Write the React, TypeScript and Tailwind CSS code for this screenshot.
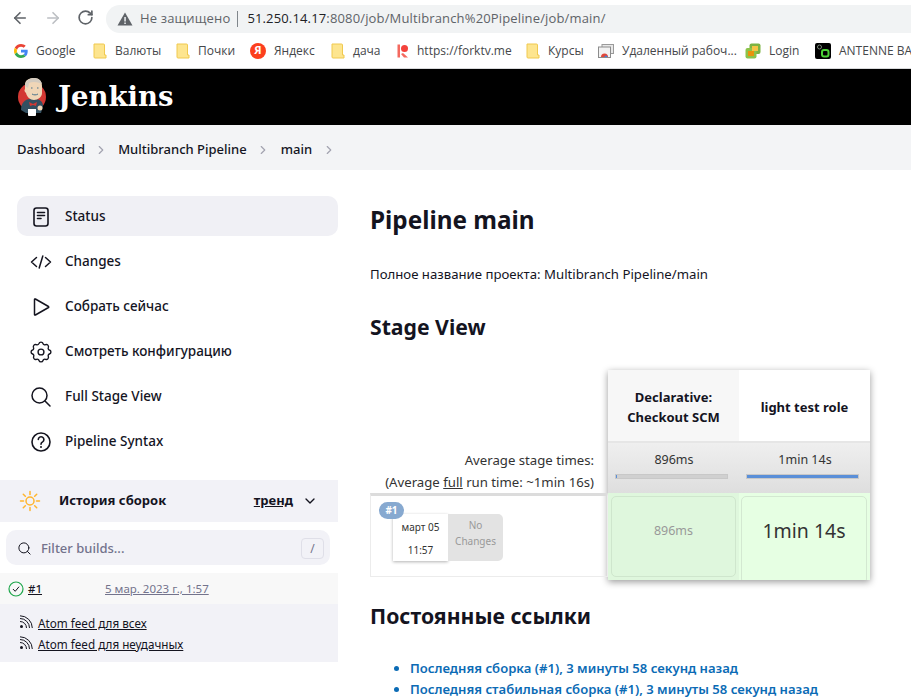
import React from "react";
import { ArrowLeft, ArrowRight, ChevronDown, ChevronRight, RotateCw, Search } from "lucide-react";

const ui = "font-['Open_Sans',sans-serif]";

const Folder = () => (
  <svg width="14" height="16" viewBox="0 0 14 16" className="shrink-0">
    <path d="M1 1h9.500a1 1 0 0 1 1 1v10h1.500v3H2a1 1 0 0 1-1-1z" fill="#fde58f" stroke="#f0c94f" strokeWidth="1" />
  </svg>
);

const Bookmark = ({ icon, label, w }: { icon: React.ReactNode; label: string; w: string }) => (
  <div className={`flex items-center gap-[8px] shrink-0 ${w}`}>
    {icon}
    <span className="text-[12px] text-[#45474a] whitespace-nowrap">{label}</span>
  </div>
);

const BrowserBar = () => (
  <div className={`${ui} bg-white border-b border-[#d9dadc]`}>
    <div className="h-[35px] flex items-center">
      <div className="w-[106px] pl-[11px] flex items-center gap-[15px] shrink-0">
        <ArrowLeft size={18} color="#5f6368" strokeWidth={2.2} />
        <ArrowRight size={18} color="#bcbfc3" strokeWidth={2.2} />
        <RotateCw size={17} color="#5f6368" strokeWidth={2.4} />
      </div>
      <div className="flex-1 h-[28px] mt-[3px] bg-[#f1f3f4] rounded-l-[14px] flex items-center pl-[11px] text-[13px] tracking-[0.15px] whitespace-nowrap">
        <svg width="16" height="14" viewBox="0 0 16 14" className="shrink-0">
          <path d="M8 0.500 15.500 13.500H0.500z" fill="#5f6368" />
          <rect x="7.300" y="5" width="1.500" height="4.500" fill="#f1f3f4" />
          <rect x="7.300" y="10.500" width="1.500" height="1.500" fill="#f1f3f4" />
        </svg>
        <span className="ml-[7px] text-[#5f6368]">Не защищено</span>
        <span className="ml-[7px] w-px h-[16px] bg-[#80868b]" />
        <span className="ml-[9px] text-[#202124]">51.250.14.17</span>
        <span className="text-[#5f6368]">:8080/job/Multibranch%20Pipeline/job/main/</span>
      </div>
    </div>
    <div className="h-[33px] pb-[2px] flex items-center pl-[14px] overflow-hidden">
      <Bookmark
        w="w-[79px]"
        label="Google"
        icon={
          <svg width="14" height="14" viewBox="0 0 48 48" className="shrink-0">
            <path fill="#EA4335" d="M24 9.500c3.500 0 6.700 1.200 9.200 3.600l6.900-6.900C35.900 2.400 30.500 0 24 0 14.600 0 6.500 5.400 2.600 13.200l8 6.200C12.500 13.700 17.800 9.500 24 9.500z" />
            <path fill="#4285F4" d="M47 24.500c0-1.600-.1-3.100-.4-4.500H24v9h13c-.6 3-2.300 5.500-4.800 7.200l7.700 6C44.400 38 47 31.800 47 24.500z" />
            <path fill="#FBBC05" d="M10.500 28.600c-.5-1.400-.8-3-.8-4.600s.3-3.200.8-4.600l-8-6.200C.9 16.500 0 20.100 0 24s.9 7.500 2.600 10.800z" />
            <path fill="#34A853" d="M24 48c6.500 0 11.900-2.100 15.900-5.800l-7.700-6c-2.200 1.500-4.900 2.300-8.200 2.300-6.200 0-11.500-4.200-13.400-9.900l-8 6.200C6.500 42.600 14.600 48 24 48z" />
          </svg>
        }
      />
      <Bookmark w="w-[83px]" label="Валюты" icon={<Folder />} />
      <Bookmark w="w-[74px]" label="Почки" icon={<Folder />} />
      <Bookmark
        w="w-[81px]"
        label="Яндекс"
        icon={
          <span className="w-[16px] h-[16px] rounded-full bg-[#fc3f1d] text-white text-[11px] font-bold flex items-center justify-center shrink-0">
            Я
          </span>
        }
      />
      <Bookmark w="w-[66px]" label="дача" icon={<Folder />} />
      <Bookmark
        w="w-[129px]"
        label="https://forktv.me"
        icon={
          <svg width="12" height="14" viewBox="0 0 12 14" className="shrink-0">
            <rect x="0.500" y="0.500" width="2.500" height="13" fill="#f4695f" />
            <circle cx="7.500" cy="4.500" r="3.500" fill="#f4433c" />
            <path d="M6 9l5 4.500H7L4 10z" fill="#f4695f" />
          </svg>
        }
      />
      <Bookmark w="w-[72px]" label="Курсы" icon={<Folder />} />
      <Bookmark
        w="w-[147px]"
        label="Удаленный рабоч..."
        icon={
          <svg width="16" height="14" viewBox="0 0 16 14" className="shrink-0">
            <rect x="4" y="0.500" width="11.500" height="9" fill="#e8e8e8" stroke="#9a9a9a" />
            <rect x="0.500" y="3" width="12" height="10.500" fill="#f2f2f2" stroke="#8c8c8c" />
            <path d="M3 13a3.500 3.500 0 0 1 7 0z" fill="#e0483a" />
            <path d="M6.500 13a1.500 1.500 0 0 1 3 0z" fill="#3f7fe0" />
          </svg>
        }
      />
      <Bookmark
        w="w-[70px]"
        label="Login"
        icon={
          <svg width="16" height="16" viewBox="0 0 16 16" className="shrink-0">
            <rect x="4.500" y="0.500" width="11" height="10.500" rx="2" fill="#7cb342" />
            <rect x="0.500" y="5" width="11" height="10.500" rx="2" fill="#8bc34a" />
            <rect x="7" y="3" width="6" height="5" fill="#f6c445" />
            <rect x="3" y="8" width="6" height="5" fill="#e8930c" />
          </svg>
        }
      />
      <Bookmark
        w="w-[120px]"
        label="ANTENNE BAYERN"
        icon={
          <svg width="16" height="16" viewBox="0 0 16 16" className="shrink-0">
            <rect width="16" height="16" rx="2" fill="#000" />
            <circle cx="4.500" cy="4" r="2" fill="none" stroke="#7a8a7a" />
            <rect x="7" y="7" width="6.500" height="6.500" rx="2" fill="none" stroke="#4cd137" strokeWidth="2" />
          </svg>
        }
      />
    </div>
  </div>
);

const JenkinsLogo = () => (
  <svg width="30" height="40" viewBox="0 0 30 40" className="shrink-0">
    <circle cx="15" cy="20" r="14" fill="#d33833" />
    <path d="M4 33c0-7 4-11 9-11h5c5 0 8 3 8 7l-2 7H9z" fill="#335061" />
    <path d="M8 8c0-5 4-7 9-7s8 3 8 8v7c0 4-4 7-8 7-4 0-7-3-8-7-1.500-1-2-3-1-4z" fill="#f0d6b7" />
    <path d="M8 9c0-5 4-8 9-8 4 0 7 2 8 6-4-2-9-3-13-1l-1 5z" fill="#d3cbc0" />
    <path d="M14 11h1.500M20 11h1.500M15 17c2 1.200 4 1.200 6 0" stroke="#49728b" strokeWidth="1" fill="none" />
    <path d="M12 25l4 2 4-2-1 4-3-1-3 1z" fill="#d33833" />
    <path d="M11 32h8v6a1 1 0 0 1-1 1h-6a1 1 0 0 1-1-1z" fill="#fff" />
    <circle cx="23" cy="31" r="2.500" fill="#f0d6b7" />
  </svg>
);

const navItems: { label: string; icon: React.ReactNode }[] = [
  {
    label: "Status",
    icon: (
      <svg width="22" height="22" viewBox="0 0 22 22" fill="none" stroke="#14141f" strokeWidth="1.600" strokeLinecap="round">
        <rect x="4" y="2" width="14" height="18" rx="2.500" />
        <path d="M7.500 6.500h7M7.500 9.500h7M7.500 12.500h3.500" />
      </svg>
    ),
  },
  {
    label: "Changes",
    icon: (
      <svg width="22" height="22" viewBox="0 0 22 22" fill="none" stroke="#14141f" strokeWidth="1.500" strokeLinecap="round" strokeLinejoin="round">
        <path d="M6.500 6.500 1.500 11l5 4.500M15.500 6.500l5 4.500-5 4.500M12.800 5 9.200 17" />
      </svg>
    ),
  },
  {
    label: "Собрать сейчас",
    icon: (
      <svg width="22" height="22" viewBox="0 0 22 22" fill="none" stroke="#14141f" strokeWidth="1.500" strokeLinejoin="round">
        <path d="M4.500 3.500v15a.6.6 0 0 0 .9.500L18.500 11.500a.6.6 0 0 0 0-1L5.400 3a.6.6 0 0 0-.9.500z" />
      </svg>
    ),
  },
  {
    label: "Смотреть конфигурацию",
    icon: (
      <svg width="22" height="22" viewBox="0 0 24 24" fill="none" stroke="#14141f" strokeWidth="1.500" strokeLinejoin="round">
        <path d="M9.800 2.800a2.300 2.300 0 0 1 4.400 0c.4 1.200 1.700 1.700 2.800 1.200a2.300 2.300 0 0 1 3 3c-.5 1.100 0 2.400 1.200 2.800a2.300 2.300 0 0 1 0 4.400c-1.200.4-1.700 1.700-1.200 2.800a2.300 2.300 0 0 1-3 3c-1.100-.5-2.400 0-2.800 1.200a2.300 2.300 0 0 1-4.400 0c-.4-1.200-1.700-1.700-2.800-1.200a2.300 2.300 0 0 1-3-3c.5-1.100 0-2.400-1.200-2.800a2.300 2.300 0 0 1 0-4.400C3.800 9.400 4.300 8.100 3.800 7a2.300 2.300 0 0 1 3-3c1.100.5 2.400 0 3-1.200z" />
        <circle cx="12" cy="12" r="3.200" />
      </svg>
    ),
  },
  {
    label: "Full Stage View",
    icon: (
      <svg width="22" height="22" viewBox="0 0 22 22" fill="none" stroke="#14141f" strokeWidth="1.500" strokeLinecap="round">
        <circle cx="9.500" cy="9.500" r="7.500" />
        <path d="m15 15 5 5" />
      </svg>
    ),
  },
  {
    label: "Pipeline Syntax",
    icon: (
      <svg width="22" height="22" viewBox="0 0 22 22" fill="none" stroke="#14141f" strokeWidth="1.600" strokeLinecap="round">
        <circle cx="11" cy="11" r="9" />
        <path d="M8.300 8.500a2.800 2.800 0 1 1 4.300 2.400c-1 .6-1.600 1.200-1.600 2.300" />
        <path d="M11 16v.1" strokeWidth="2" />
      </svg>
    ),
  },
];

const Rss = () => (
  <svg width="14" height="14" viewBox="0 0 14 14" fill="none" stroke="#14141f" strokeWidth="1" className="shrink-0 -mt-[3px]">
    <circle cx="2.500" cy="11.500" r="1.500" fill="#14141f" stroke="none" />
    <path d="M1 6.500a6.500 6.500 0 0 1 6.500 6.500M1 3.500A9.500 9.500 0 0 1 10.500 13M1 .8A12.300 12.300 0 0 1 13.300 13" />
  </svg>
);

const Sidebar = () => (
  <aside className="w-[338px] shrink-0">
    <nav className="pl-[17px] pt-[26px] flex flex-col gap-[5px]">
      {navItems.map((item, i) => (
        <div
          key={item.label}
          className={`h-[40px] pt-[2px] rounded-[10px] flex items-center pl-[13px] gap-[13px] text-[13.500px] text-[#14141f] font-medium ${
            i === 0 ? "bg-[#f0f0f5]" : ""
          }`}
        >
          <span className="w-[22px] h-[22px] flex items-center justify-center shrink-0">{item.icon}</span>
          <span className="pb-[2px]">{item.label}</span>
        </div>
      ))}
    </nav>

    <div className="mt-[19px] h-[42px] bg-[#f2f2f7] flex items-center pl-[19px] pr-[20px]">
      <svg width="22" height="22" viewBox="0 0 22 22" fill="none" stroke="#ffb52e" strokeWidth="1.500" strokeLinecap="round" className="shrink-0">
        <circle cx="11" cy="11" r="4" />
        <path d="M11 1.500v3M11 17.500v3M1.500 11h3M17.500 11h3M4.300 4.300l2 2M15.700 15.700l2 2M4.300 17.700l2-2M15.700 6.300l2-2" />
      </svg>
      <span className="ml-[18px] text-[13px] font-bold text-[#14141f]">История сборок</span>
      <span className="ml-auto text-[13px] font-bold text-[#14141f] underline">тренд</span>
      <ChevronDown size={16} color="#14141f" className="ml-[9px]" />
    </div>

    <div className="mt-[8px] mx-[6px] w-[324px] h-[35px] pt-[2px] bg-[#f2f2f7] rounded-[10px] flex items-center pl-[11px] pr-[6px]">
      <Search size={15} color="#14141f" strokeWidth={1.600} />
      <span className="ml-[9px] text-[13px] font-medium text-[#73738c]">Filter builds...</span>
      <span className="ml-auto w-[23px] h-[21px] border border-[#dfdfe8] rounded-[4px] text-[12px] text-[#73738c] flex items-center justify-center">
        /
      </span>
    </div>

    <div className="mt-[8px] h-[31px] bg-[#f8f8f8] flex items-center pl-[8px] text-[11.500px]">
      <svg width="16" height="16" viewBox="0 0 16 16" fill="none" stroke="#1ea64b" strokeWidth="1.200" strokeLinecap="round" strokeLinejoin="round" className="shrink-0">
        <circle cx="8" cy="8" r="7" />
        <path d="m5.200 8.300 2 2 3.600-4.300" stroke="#14141f" strokeWidth="1" />
      </svg>
      <span className="ml-[4px] w-[77px] font-medium text-[#14141f] underline">#1</span>
      <span className="text-[#73738c] underline">5 мар. 2023 г., 1:57</span>
    </div>

    <div className="h-[58px] bg-[#f2f2f7] pl-[19px] pt-[12px] flex flex-col gap-[6px] text-[11.700px] text-[#14141f]">
      <div className="flex items-center gap-[5px] h-[15px]">
        <Rss />
        <span className="underline">Atom feed для всех</span>
      </div>
      <div className="flex items-center gap-[5px] h-[15px]">
        <Rss />
        <span className="underline">Atom feed для неудачных</span>
      </div>
    </div>
  </aside>
);

const StageHeader = ({ children, bg }: { children: React.ReactNode; bg: string }) => (
  <div className={`h-[71px] pt-[2px] flex items-center justify-center text-center text-[13px] leading-[20px] font-bold text-[#14141f] ${bg}`}>
    {children}
  </div>
);

const StageAverage = ({ label, fill }: { label: string; fill: string }) => (
  <div className="h-[52px] bg-gradient-to-b from-[#efefef] to-[#dedede] border-t-2 border-[#e6e6e6] pl-[7px] pr-[6px] pt-[8px] text-center text-[12.500px] text-[#333] leading-[18px]">
    {label}
    <div className="mt-[5px] mr-[5px] h-[5px] bg-[#d0d0d0] border border-[#c8c8c8] overflow-hidden">
      <div className={`h-full bg-[#5a8fd8] ${fill}`} />
    </div>
  </div>
);

const StageTable = () => (
  <div className="mt-[29px] flex items-stretch w-[500px] text-[#333]">
    <div className="w-[238px] shrink-0 flex flex-col justify-end">
      <div className="pr-[14px] text-right text-[13.200px] leading-[22px]">
        <div>Average stage times:</div>
        <div>
          (Average <span className="underline">full</span> run time: ~1min 16s)
        </div>
      </div>
      <div className="relative h-[84px] mb-[3px] border-t-[3px] border-t-[#dcdcdc] border-x border-b border-[#ececec]">
        <div className="ml-[22px] mt-[18px] flex w-fit">
          <div className="w-[55px] h-[47px] pt-[2px] bg-white shadow-[0_1px_3px_rgba(0,0,0,0.3)] text-center text-[10px] leading-[23px] text-[#333]">
            <div>март 05</div>
            <div>11:57</div>
          </div>
          <div className="w-[55px] h-[47px] bg-[#e3e3e3] rounded-r-[5px] text-center text-[10px] leading-[16px] text-[#999] pt-[3px]">
            No
            <br />
            Changes
          </div>
        </div>
        <span className="absolute left-[8px] top-[6px] w-[25px] h-[17px] rounded-full bg-[#87a9d0] text-white text-[10px] font-bold flex items-center justify-center">
          #1
        </span>
      </div>
    </div>

    <div className="w-[262px] shrink-0 grid grid-cols-2 shadow-[0_2px_7px_rgba(0,0,0,0.4)] bg-white">
      <StageHeader bg="bg-[#f7f7f7]">
        Declarative:
        <br />
        Checkout SCM
      </StageHeader>
      <StageHeader bg="bg-white">light test role</StageHeader>
      <StageAverage label="896ms" fill="w-[1px]" />
      <StageAverage label="1min 14s" fill="w-full" />
      <div className="h-[87px] bg-[#dff7dd] p-[3px] col-start-1">
        <div className="h-full rounded-[5px] border border-[#cfe6cd] bg-[#dff7dd] flex items-center justify-center pb-[10px] text-[12.500px] text-[#999]">
          896ms
        </div>
      </div>
      <div className="h-[87px] bg-[#e6ffe3] pl-[2px] pr-[3px] pt-[3px] overflow-hidden">
        <div className="h-[88px] rounded-[5px] border border-[#d3e8d1] bg-[#e6ffe3] flex items-center justify-center pb-[18px] text-[19.500px] text-[#333]">
          1min 14s
        </div>
      </div>
    </div>
  </div>
);

export default function App() {
  return (
    <div className="h-[698px] w-[911px] overflow-hidden bg-white font-['Noto_Sans',sans-serif]">
      <BrowserBar />
      <header className="h-[56px] bg-black flex items-center pl-[17px]">
        <JenkinsLogo />
        <span className="ml-[11px] text-[27.500px] font-bold text-white font-['DejaVu_Serif',serif]">
          Jenkins
        </span>
      </header>
      <div className="h-[45px] pt-[4px] bg-[#f3f4f6] flex items-center pl-[17px] text-[13px] font-medium text-[#14141f]">
        <span>Dashboard</span>
        <ChevronRight size={14} color="#a3a3b0" className="ml-[9px] mr-[10px]" />
        <span>Multibranch Pipeline</span>
        <ChevronRight size={14} color="#a3a3b0" className="ml-[9px] mr-[11px]" />
        <span>main</span>
        <ChevronRight size={14} color="#a3a3b0" className="ml-[10px]" />
      </div>
      <div className="flex">
        <Sidebar />
        <main className="ml-[32px] flex-1 min-w-0 text-[#14141f]">
          <h1 className="mt-[34px] text-[24.300px] leading-[32px] font-bold">Pipeline main</h1>
          <p className="mt-[28px] text-[13.200px] leading-[20px]">Полное название проекта: Multibranch Pipeline/main</p>
          <h2 className="mt-[29px] text-[21.200px] leading-[28px] font-bold">Stage View</h2>
          <StageTable />
          <h2 className="mt-[22px] text-[21.200px] leading-[28px] font-bold">Постоянные ссылки</h2>
          <ul className="mt-[28px] ml-[40px] list-disc text-[13.100px] font-semibold leading-[21px] text-[#0b6bb5]">
            <li>Последняя сборка (#1), 3 минуты 58 секунд назад</li>
            <li>Последняя стабильная сборка (#1), 3 минуты 58 секунд назад</li>
          </ul>
        </main>
      </div>
    </div>
  );
}
